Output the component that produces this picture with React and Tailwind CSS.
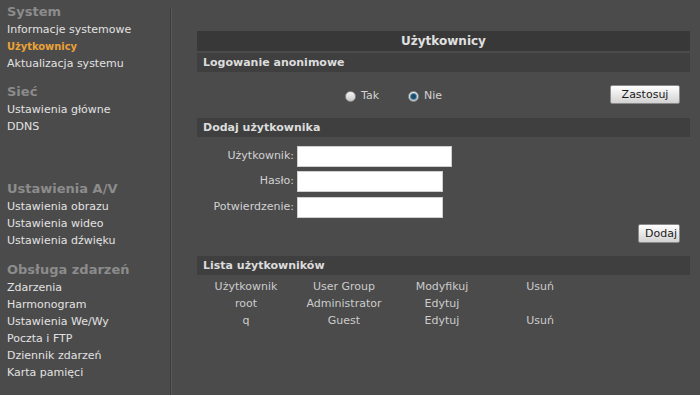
import React from "react";

const menu = [
  {
    title: "System",
    items: ["Informacje systemowe", "Użytkownicy", "Aktualizacja systemu"],
    gap: "mt-0",
  },
  { title: "Sieć", items: ["Ustawienia główne", "DDNS"], gap: "mt-[11px]" },
  {
    title: "Ustawienia A/V",
    items: ["Ustawienia obrazu", "Ustawienia wideo", "Ustawienia dźwięku"],
    gap: "mt-[45px]",
  },
  {
    title: "Obsługa zdarzeń",
    items: [
      "Zdarzenia",
      "Harmonogram",
      "Ustawienia We/Wy",
      "Poczta i FTP",
      "Dziennik zdarzeń",
      "Karta pamięci",
    ],
    gap: "mt-[12px]",
  },
];

const users = [
  ["root", "Administrator", "Edytuj", ""],
  ["q", "Guest", "Edytuj", "Usuń"],
];

const SectionBar = ({ children }) => (
  <div className="h-[19px] bg-[#3f3f3f] pl-[6px] text-[11px] font-bold leading-[20px] text-[#dcdcdc]">
    {children}
  </div>
);

const Button = ({ children, className = "" }) => (
  <button
    className={`h-[19px] rounded-[2px] border border-[#8a8a8a] bg-gradient-to-b from-[#ffffff] to-[#d2d2d2] px-[6px] text-[11px] leading-[17px] text-[#1a1a1a] ${className}`}
  >
    {children}
  </button>
);

const Radio = ({ checked, label }) => (
  <label className="flex items-center gap-[5px]">
    <span className="flex h-[11px] w-[11px] items-center justify-center rounded-full border border-[#8d8d8d] bg-gradient-to-b from-[#f4f4f4] to-[#c8c8c8]">
      {checked && <span className="h-[5px] w-[5px] rounded-full bg-[#1f4b6b] ring-1 ring-[#5b8db0]" />}
    </span>
    <span>{label}</span>
  </label>
);

const Field = ({ label, width }) => (
  <div className="flex items-center">
    <span className="w-[97px] text-right">{label}</span>
    <input
      className={`ml-[3px] h-[21px] ${width} border border-[#cfcfcf] bg-white outline-none`}
    />
  </div>
);

export default function App() {
  return (
    <div className="flex h-[395px] w-[700px] overflow-hidden bg-[#4b4b4b] font-['DejaVu_Sans',Verdana,sans-serif]">
      <aside className="w-[170px] shrink-0 pl-[7px] pt-[3px]">
        {menu.map((group) => (
          <div key={group.title} className={group.gap}>
            <div className="text-[13px] font-bold leading-[18px] text-[#8c8c8c]">
              {group.title}
            </div>
            {group.items.map((item) => (
              <div
                key={item}
                className={
                  item === "Użytkownicy"
                    ? "font-['DejaVu_Sans_Condensed',sans-serif] text-[11px] font-bold leading-[17px] text-[#eba237]"
                    : "text-[11px] leading-[17px] text-[#e2e2e2]"
                }
              >
                {item}
              </div>
            ))}
          </div>
        ))}
      </aside>

      <div className="mt-[8px] w-[2px] shrink-0 border-l border-r border-l-[#3c3c3c] border-r-[#575757]" />

      <main className="ml-[25px] w-[493px] pt-[31px] text-[11px] text-[#d2d2d2]">
        <div className="h-[20px] bg-[#383838] text-center text-[12px] font-bold leading-[21px] text-[#e0e0e0]">
          Użytkownicy
        </div>

        <div className="mt-[2px]">
          <SectionBar>Logowanie anonimowe</SectionBar>
        </div>
        <div className="flex items-start pt-[13px] pb-[14px]">
          <div className="ml-[148px] mt-[4px] flex items-center gap-[29px] leading-[14px]">
            <Radio label="Tak" />
            <Radio checked label="Nie" />
          </div>
          <Button className="ml-auto mr-[10px] w-[70px]">Zastosuj</Button>
        </div>

        <SectionBar>Dodaj użytkownika</SectionBar>
        <div className="mt-[9px] flex flex-col">
          <Field label="Użytkownik:" width="w-[155px]" />
          <div className="mt-[4px]">
            <Field label="Hasło:" width="w-[146px]" />
          </div>
          <div className="mt-[5px]">
            <Field label="Potwierdzenie:" width="w-[146px]" />
          </div>
        </div>
        <div className="mt-[6px] flex justify-end pr-[10px]">
          <Button className="w-[42px] px-0">Dodaj</Button>
        </div>

        <div className="mt-[13px]">
          <SectionBar>Lista użytkowników</SectionBar>
        </div>
        <table className="mt-[3px] table-fixed text-[11px] text-[#cccccc]">
          <tbody>
            <tr className="h-[17px]">
              {["Użytkownik", "User Group", "Modyfikuj", "Usuń"].map((h) => (
                <td key={h} className="w-[98px] p-0 text-center leading-[17px]">
                  {h}
                </td>
              ))}
            </tr>
            {users.map((row) => (
              <tr key={row[0]} className="h-[17px]">
                {row.map((cell, i) => (
                  <td key={i} className="w-[98px] p-0 text-center leading-[17px]">
                    {cell}
                  </td>
                ))}
              </tr>
            ))}
          </tbody>
        </table>
      </main>
    </div>
  );
}
